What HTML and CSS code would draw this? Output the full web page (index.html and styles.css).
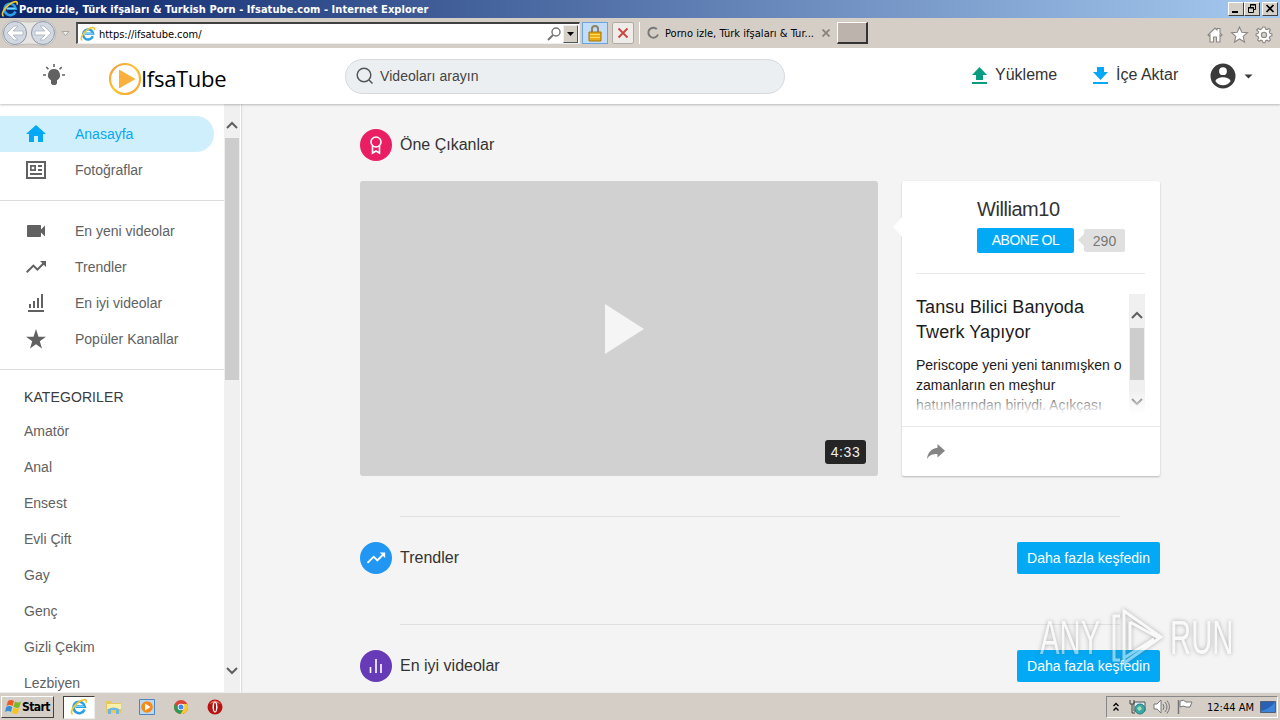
FILE: index.html
```html
<!DOCTYPE html>
<html lang="tr">
<head>
    <meta charset="UTF-8">
    <meta name="viewport" content="width=device-width, initial-scale=1.0">
    <title>Porno izle, Türk ifşaları &amp; Turkish Porn - Ifsatube.com</title>
    <link rel="stylesheet" href="styles.css">
</head>
<body>
    <svg class="defs" width="0" height="0">
        <symbol id="ie" viewBox="0 0 18 18">
            <path d="M14.5 11.5A5.700 5.700 0 1 1 14.800 8.600H5.500" fill="none" stroke="#2b9fe6" stroke-width="2.600"/>
            <path d="M14.300 8.400H5.600" stroke="#8bdcff" stroke-width="1"/>
            <path d="M2.600 16.200C-.5 15 3 8 8.500 4.200C13 1 17.500.5 16 4.800" fill="none" stroke="#f3c62c" stroke-width="1.700"/>
        </symbol>
        <symbol id="trend" viewBox="0 0 24 24">
            <path d="M16 6l2.290 2.290-4.880 4.880-4-4L2 16.590 3.410 18l6-6 4 4 6.300-6.290L22 12V6z"/>
        </symbol>
    </svg>

    <!-- Window title -->
    <div class="titlebar">
        <svg class="title-icon" width="18" height="18"><use href="#ie"/></svg>
        <span class="window-title">Porno izle, Türk ifşaları &amp; Turkish Porn - Ifsatube.com - Internet Explorer</span>
        <div class="window-buttons">
            <span><svg width="14" height="11"><path d="M3 8h6v2H3z"/></svg></span>
            <span><svg width="14" height="11" fill="none" stroke="#000"><path d="M5.500 4V1.500h5v5H9M5 2h6M3.500 4.500h5v5h-5zM3 5h6"/></svg></span>
            <span class="close"><svg width="14" height="11" fill="none" stroke="#000" stroke-width="1.700"><path d="M3.500 2l7 7M10.500 2l-7 7"/></svg></span>
        </div>
    </div>

    <!-- Browser toolbar -->
    <div class="toolbar">
        <svg class="nav-arrows" width="74" height="30" viewBox="0 0 74 30">
            <path d="M15 2Q29 6 43 2A13 13 0 0 1 43 28Q29 24 15 28A13 13 0 0 1 15 2Z" fill="#e7e5e3" stroke="#c0bcb8"/>
            <g fill="#d3d9e2" stroke="#8d97a5">
                <circle cx="15" cy="15" r="11.500"/>
                <circle cx="43" cy="15" r="11.500"/>
            </g>
            <g fill="#fff" stroke="#a9b2bf" stroke-width=".8">
                <path d="M7 15l7-7h4l-5 5h10v4H13l5 5h-4z"/>
                <path d="M51 15l-7-7h-4l5 5H35v4h10l-5 5h4z"/>
            </g>
            <path d="M62 13.500h7l-3.500 4z" fill="#eee" stroke="#aaa5a0"/>
        </svg>
        <div class="address">
            <svg width="16" height="16"><use href="#ie"/></svg>
            <span>https://ifsatube.com/</span>
            <svg class="address-search" width="14" height="14" fill="none" stroke="#747474"><circle cx="9" cy="5" r="4" stroke-width="1.400"/><path d="M6 8l-5 5" stroke-width="2"/></svg>
            <i class="dropdown"><svg width="7" height="4"><path d="M0 0h7L3.500 4z"/></svg></i>
        </div>
        <div class="tool lock">
            <svg width="14" height="17" viewBox="0 0 14 17"><path d="M4 8V4a3 3 0 0 1 6 0v4" fill="none" stroke="#8f8361" stroke-width="2"/><path d="M1 7h12v9H1z" fill="#e9ad16" stroke="#a47508"/><path d="M2 9.500h10M2 12.500h10" stroke="#ffda61"/></svg>
        </div>
        <div class="tool stop">
            <svg width="12" height="12" fill="none" stroke="#c8463d" stroke-width="1.800"><path d="M1.500 1.500l9 9M10.500 1.500l-9 9"/></svg>
        </div>
        <div class="tab">
            <svg width="14" height="14" fill="none" stroke="#777" stroke-width="2"><path d="M10.800 3A5 5 0 1 0 12 8.500"/></svg>
            <span>Porno izle, Türk ifşaları &amp; Tur...</span>
            <svg width="8" height="8" fill="none" stroke="#85817c" stroke-width="1.700"><path d="M.5.5l7 7M7.500.5l-7 7"/></svg>
        </div>
        <div class="new-tab"></div>
        <svg class="browser-icons" width="66" height="18" fill="#fff" stroke="#8b8782" stroke-width="1.100">
            <path d="M1 9l7-7 2 2V2.500h3V7l2 2-1 1-1-1v7H9.500v-5h-3v5H3V9l-1 1z"/>
            <path d="M32.500 1l2.300 5.200 5.700.5-4.300 3.700 1.300 5.600-5-3-5 3 1.300-5.600-4.300-3.700 5.700-.5z"/>
            <path d="M56 1h2l.5 2 1.500.6 1.900-1.100 1.500 1.500-1.100 1.900.6 1.500 2 .5v2l-2 .5-.6 1.500 1.100 1.900-1.500 1.500-1.900-1.100-1.500.6-.5 2h-2l-.5-2-1.500-.6-1.900 1.100-1.500-1.500 1.100-1.900-.6-1.500-2-.5v-2l2-.5.6-1.500L49.600 4l1.500-1.500L53 3.600l1.500-.6z"/>
            <circle cx="57" cy="8.900" r="2.600" fill="#d6cfc8"/>
        </svg>
    </div>

    <div class="page">
        <header>
            <svg class="bulb" width="24" height="24" viewBox="0 0 24 24" fill="#616161">
                <path d="M12 6a6 6 0 0 0-3 11.200V18h6v-.8A6 6 0 0 0 12 6zM9 18h6v2.500l-1.500 1.500h-3L9 20.500zM11.200 1h1.600v3h-1.600zM1 11.200h3v1.600H1zM20 11.200h3v1.600h-3zM3.800 4.700l1.100-1.100L7 5.700 5.900 6.800zM17 5.700l2.100-2.100 1.100 1.100-2.100 2.100z"/>
            </svg>
            <div class="logo">
                <svg width="34" height="34" viewBox="0 0 34 34">
                    <defs>
                        <linearGradient id="ring" x2="1" y2="1"><stop stop-color="#f79a3c"/><stop offset=".5" stop-color="#fbc42e"/><stop offset="1" stop-color="#f9a03a"/></linearGradient>
                    </defs>
                    <circle cx="17" cy="17" r="15" fill="#fff" stroke="url(#ring)" stroke-width="2.200"/>
                    <path d="M11 7.500v19L27.500 17z" fill="#fbb03b"/>
                </svg>
                <span>IfsaTube</span>
            </div>
            <div class="search">
                <svg width="18" height="18" fill="none" stroke="#555" stroke-width="1.500"><circle cx="8" cy="8" r="6.800"/><path d="M13 13l3.500 3.500"/></svg>
                <span>Videoları arayın</span>
            </div>
            <a class="action">
                <svg width="15" height="17" fill="#0a9b81"><path d="M7.500 0L15 8h-4v5H4V8H0zM0 15h15v2H0z"/></svg>
                <span>Yükleme</span>
            </a>
            <a class="action import">
                <svg width="15" height="17" fill="#03a9f4"><path d="M4 0h7v5h4l-7.500 8L0 5h4zM0 15h15v2H0z"/></svg>
                <span>İçe Aktar</span>
            </a>
            <svg class="user" width="44" height="26" viewBox="0 0 44 26" fill="#3a3a3a">
                <path fill-rule="evenodd" d="M13 .5a12.500 12.500 0 1 0 0 25 12.500 12.500 0 0 0 0-25zm0 3.800a3.900 3.900 0 1 1 0 7.800 3.900 3.900 0 0 1 0-7.800zm0 17.900a9 9 0 0 1-7.500-4c0-2.500 5-3.900 7.500-3.900s7.500 1.400 7.500 3.900a9 9 0 0 1-7.500 4z"/>
                <path d="M34.500 11.500h8l-4 4z"/>
            </svg>
        </header>

        <div class="content">
            <aside>
                <nav>
                    <a class="item active"><svg viewBox="0 0 24 24"><path d="M10 20v-6h4v6h5v-8h3L12 3 2 12h3v8z"/></svg>Anasayfa</a>
                    <a class="item"><svg viewBox="0 0 24 24"><path fill-rule="evenodd" d="M2 3h20v18H2zM4 5v14h16V5zM6 7h6v6H6zM7.700 8.700v2.600h2.600V8.700zM14 7h4v2h-4zM14 11h4v2h-4zM6 15h12v2H6z"/></svg>Fotoğraflar</a>
                    <hr>
                    <a class="item"><svg viewBox="0 0 24 24"><path d="M17 10.500V7c0-.6-.4-1-1-1H4c-.6 0-1 .4-1 1v10c0 .6.4 1 1 1h12c.6 0 1-.4 1-1v-3.500l4 4v-11z"/></svg>En yeni videolar</a>
                    <a class="item"><svg><use href="#trend"/></svg>Trendler</a>
                    <a class="item"><svg viewBox="0 0 24 24"><path d="M4 19h16v2H4zM5 13h2v4H5zM9 10h2v7H9zM13 7h2v10h-2zM17 3h2v14h-2z"/></svg>En iyi videolar</a>
                    <a class="item"><svg viewBox="0 0 24 24"><path d="M12 17.300l6 4.200-2.200-7.200L22 9.700h-7.500L12 2l-2.500 7.700H2l6.200 4.600L6 21.500z"/></svg>Popüler Kanallar</a>
                    <hr>
                    <h4>KATEGORILER</h4>
                    <a class="category">Amatör</a>
                    <a class="category">Anal</a>
                    <a class="category">Ensest</a>
                    <a class="category">Evli Çift</a>
                    <a class="category">Gay</a>
                    <a class="category">Genç</a>
                    <a class="category">Gizli Çekim</a>
                    <a class="category">Lezbiyen</a>
                </nav>
                <div class="scrollbar">
                    <svg width="12" height="8"><path d="M1 7l5-5 5 5"/></svg>
                    <i></i>
                    <svg class="down" width="12" height="8"><path d="M1 1l5 5 5-5"/></svg>
                </div>
            </aside>

            <main>
                <div class="section-title">
                    <span class="badge pink"><svg width="24" height="24" viewBox="0 0 24 24"><circle cx="12" cy="9" r="5"/><path d="M8.500 13v7l3.500-2 3.500 2v-7"/></svg></span>
                    <h2>Öne Çıkanlar</h2>
                </div>

                <div class="featured">
                    <div class="video">
                        <svg width="40" height="50"><path d="M0 0v50l39-25z" fill="#f5f5f5"/></svg>
                        <span class="duration">4:33</span>
                    </div>
                    <div class="card">
                        <div class="channel">
                            <h3>William10</h3>
                            <div class="subscribe">
                                <button>ABONE OL</button>
                                <span class="count">290</span>
                            </div>
                        </div>
                        <div class="info">
                            <div class="description">
                                <h3>Tansu Bilici Banyoda Twerk Yapıyor</h3>
                                <p>Periscope yeni yeni tanımışken o zamanların en meşhur hatunlarından biriydi. Açıkçası</p>
                            </div>
                            <div class="scrollbar small">
                                <svg width="12" height="8"><path d="M1 7l5-5 5 5"/></svg>
                                <i></i>
                                <svg class="down" width="12" height="8"><path d="M1 1l5 5 5-5"/></svg>
                            </div>
                        </div>
                        <div class="share">
                            <svg width="18" height="15"><path d="M10.500 0L18 6.800l-7.500 6.700V10C5.500 10 2.200 11 0 15c.7-6 4-10.300 10.500-11.200z" fill="#858585"/></svg>
                        </div>
                    </div>
                </div>

                <section>
                    <div class="section-title">
                        <span class="badge blue"><svg class="solid" width="22" height="22"><use href="#trend"/></svg></span>
                        <h2>Trendler</h2>
                        <button>Daha fazla keşfedin</button>
                    </div>
                </section>
                <section>
                    <div class="section-title">
                        <span class="badge purple"><svg width="24" height="24" viewBox="0 0 24 24"><path d="M6.500 19v-6M12 19V5M17 19v-9"/></svg></span>
                        <h2>En iyi videolar</h2>
                        <button>Daha fazla keşfedin</button>
                    </div>
                </section>
            </main>
        </div>

        <div class="watermark">
            <span>ANY</span>
            <svg width="56" height="60" viewBox="0 0 56 60" fill="none" stroke="#fff" stroke-width="3">
                <path d="M11 8H5v44h6"/>
                <path d="M15 3v52l37-26zM21 14v28M21 14l29 16M15 50l30-19"/>
            </svg>
            <span>RUN</span>
        </div>
    </div>

    <div class="taskbar">
        <div class="start">
            <svg width="17" height="16" viewBox="0 0 17 16">
                <path d="M3 2q3-2 6 0L7.500 7q-3-2-6 0z" fill="#ec5b24"/>
                <path d="M10 2.500q3 2 6 0L14.500 8q-3 2-6-.5z" fill="#7bb928"/>
                <path d="M1.200 8q3-2 6 0L6 13q-3-2-6 0z" fill="#348fd8"/>
                <path d="M8.200 8.500q3 2 6 .5L13 14q-3 2-6-.5z" fill="#f6c51d"/>
            </svg>
            <span>Start</span>
        </div>
        <div class="task open"><svg width="18" height="18"><use href="#ie"/></svg></div>
        <div class="task">
            <svg width="17" height="16"><path d="M1 2h5l1 2h9v10H1z" fill="#e8c85d"/><path d="M2 5h14v5H2z" fill="#fbefaa"/><path d="M3 15v-5q6-3 11 0v5h-3v-4H6v4z" fill="#6cb6df"/></svg>
        </div>
        <div class="task">
            <svg width="16" height="16"><path d="M.5.5h15v15H.5z" fill="#b9d9f5" stroke="#4c86bb"/><circle cx="8" cy="8" r="5.800" fill="#f58a16"/><path d="M6 4.500v7L11.500 8z" fill="#fff"/></svg>
        </div>
        <div class="task">
            <svg width="14" height="14" viewBox="0 0 14 14"><circle cx="7" cy="7" r="7" fill="#db4437"/><path d="M1 3.500A7 7 0 0 0 6.500 14L10 8.500 4 8.500z" fill="#2c9b50"/><path d="M7 4h6.300A7 7 0 0 1 6.500 14L10 8.500z" fill="#f8cb2e"/><circle cx="7" cy="7" r="3.300" fill="#fff"/><circle cx="7" cy="7" r="2.500" fill="#4285f4"/></svg>
        </div>
        <div class="task">
            <svg width="16" height="16"><circle cx="8" cy="8" r="7.500" fill="#b91212"/><path d="M2 5q6-7 12 0-6-2-12 0" fill="#e06a60"/><ellipse cx="8" cy="8" rx="2.500" ry="5.500" fill="#fff"/><ellipse cx="8" cy="8" rx="1" ry="4.500" fill="#a51010"/></svg>
        </div>
        <div class="tray">
            <svg width="6" height="10" fill="none" stroke="#000" stroke-width="1.300"><path d="M.5 4L3 1.500 5.500 4M.5 8.500L3 6l2.500 2.500"/></svg>
            <svg class="network" width="17" height="16"><path d="M5 3h11v9H5z" fill="#d7edf2" stroke="#555"/><path d="M1 1v4h4V1M3 5v9h3" fill="none" stroke="#444"/><circle cx="11" cy="10" r="5" fill="#3aa7a1" stroke="#2a8183"/><path d="M8 9l3-2 2 3-3 2z" fill="#a4dfc0"/></svg>
            <svg class="sound" width="17" height="16" fill="none" stroke="#777"><path d="M1 5h3l4-4v13l-4-4H1z" fill="#fff"/><path d="M10 5q2 3 0 6M12 3q4 5 0 10M14 1.500q5 6 0 13"/></svg>
            <svg class="flag" width="17" height="16"><path d="M1.500 1v14" stroke="#777" stroke-width="1.500"/><path d="M3 2q4-2 6 1h6l-2 5H9Q6 6 3 8z" fill="#fff" stroke="#777"/></svg>
            <span>12:44 AM</span>
            <svg class="desktop" width="16" height="13"><path d="M.5.5h15v11H.5z" fill="#2860b5" stroke="#516078"/><path d="M1 10Q10 8 15 1v10H1z" fill="#3d83d7"/></svg>
        </div>
    </div>
</body>
</html>
```
FILE: styles.css
```css
* {
    box-sizing: border-box;
}

body {
    margin: 0;
    width: 1280px;
    height: 720px;
    overflow: hidden;
    display: flex;
    flex-direction: column;
    font-family: "Liberation Sans", Arial, sans-serif;
    color: #333;
    background-color: #f4f4f4;
}

svg {
    flex-shrink: 0;
}

.defs {
    position: absolute;
}

h2, h3, h4, p {
    margin: 0;
    font-weight: normal;
}

.titlebar, .toolbar, .taskbar {
    display: flex;
    align-items: center;
    flex-shrink: 0;
    font-family: "DejaVu Sans Condensed", "DejaVu Sans", sans-serif;
    font-size: 11px;
    color: #000;
    white-space: nowrap;
}

.titlebar {
    height: 18px;
    padding: 0 2px 0 1px;
    background: linear-gradient(to right, #0a246a, #a6caf0);
}

.window-title {
    color: white;
    font-weight: bold;
    letter-spacing: 0.06px;
}

.window-buttons {
    display: flex;
    margin-left: auto;
}

.window-buttons span {
    display: flex;
    width: 16px;
    height: 14px;
    background-color: #d4d0c8;
    border: 1px solid;
    border-color: #fff #404040 #404040 #fff;
}

.window-buttons .close {
    margin-left: 2px;
}

.toolbar {
    height: 30px;
    background-color: #d5cec7;
}

.address {
    display: flex;
    align-items: center;
    width: 504px;
    height: 22px;
    margin-left: 2px;
    padding: 1px 1px 1px 2px;
    background-color: white;
    border: 1px solid #eee;
    border-top: 2px solid #404040;
    border-left: 2px solid #555;
}

.address span {
    margin: 1px 0 0 3px;
    letter-spacing: -0.03px;
}

.address-search {
    margin-left: auto;
}

.dropdown {
    display: flex;
    align-items: center;
    justify-content: center;
    width: 15px;
    height: 18px;
    margin-left: 2px;
    background-color: #d4d0c8;
    border: 1px solid;
    border-color: #eee #555 #555 #eee;
}

.tool {
    display: flex;
    align-items: center;
    justify-content: center;
    height: 22px;
}

.lock {
    width: 26px;
    margin-left: 2px;
    background-color: #c3dcf8;
    border: 1px solid #6da4df;
}

.stop {
    width: 22px;
    margin-left: 4px;
    background-color: #eeebe9;
    border: 1px solid #b2aca7;
    border-radius: 2px;
}

.tab {
    display: flex;
    align-items: center;
    width: 198px;
    height: 22px;
    margin-left: 5px;
    padding-left: 6px;
    border-left: 1px solid #fff;
}

.tab span {
    width: 151px;
    margin: 1px 6px 0 5px;
    letter-spacing: 0.03px;
}

.new-tab {
    width: 31px;
    height: 22px;
    background-color: #bbb3ac;
    border: 1px solid;
    border-width: 1px 2px 2px 1px;
    border-color: #fff #333 #333 #fff;
}

.browser-icons {
    margin: 3px 7px 0 auto;
}

.page {
    position: relative;
    display: flex;
    flex-direction: column;
    height: 644px;
    overflow: hidden;
}

header {
    position: relative;
    z-index: 1;
    display: flex;
    align-items: center;
    flex-shrink: 0;
    height: 56px;
    padding-left: 42px;
    background-color: white;
    box-shadow: 0 1px 2px rgba(0, 0, 0, 0.25);
}

.bulb {
    margin-bottom: 2px;
}

.logo {
    display: flex;
    align-items: center;
    width: 237px;
    margin: 6px 0 0 42px;
    color: #000;
    font-family: "Open Sans", sans-serif;
    font-size: 22px;
    letter-spacing: -0.3px;
}

.logo span {
    margin: -2px 0 0 -1px;
}

.search {
    display: flex;
    align-items: center;
    width: 440px;
    height: 35px;
    padding-left: 10px;
    font-size: 14px;
    color: #444;
    background-color: #eceff1;
    border: 1px solid #d6dadd;
    border-radius: 18px;
}

.search span {
    margin-left: 6px;
    letter-spacing: 0.05px;
}

.action {
    display: flex;
    align-items: center;
    width: 121px;
    margin-left: 187px;
    font-size: 16px;
    margin-bottom: 2px;
}

.action span {
    margin-left: 8px;
}

.import {
    width: 117px;
    margin-left: 0;
}

.content {
    display: flex;
    height: 588px;
}

aside {
    display: flex;
    width: 241px;
    background-color: white;
    box-shadow: 0 0 2px rgba(0, 0, 0, 0.3);
}

nav {
    width: 224px;
    padding-top: 12px;
}

.item, .category {
    display: flex;
    align-items: center;
    height: 36px;
    font-size: 14px;
    color: #616161;
}

.item {
    padding-left: 24px;
}

.item svg {
    width: 24px;
    height: 24px;
    margin-right: 27px;
    fill: #616161;
}

.item.active {
    width: 214px;
    color: #03a9f4;
    background-color: #d0effd;
    border-radius: 0 18px 18px 0;
}

.item.active svg {
    fill: #03a9f4;
}

.category {
    padding-left: 24px;
}

hr {
    height: 1px;
    margin: 12px 0;
    background-color: #dcdcdc;
    border: none;
}

h4 {
    height: 31px;
    padding: 7px 0 0 24px;
    font-size: 14px;
    line-height: 16px;
    color: #3b3b3b;
    letter-spacing: 0.1px;
}

.scrollbar {
    display: flex;
    flex-direction: column;
    align-items: center;
    width: 16px;
    padding: 17px 0;
    background-color: #f0f0f0;
}

.scrollbar svg {
    fill: none;
    stroke: #606060;
    stroke-width: 2;
}

.scrollbar i {
    width: 14px;
    height: 242px;
    margin-top: 9px;
    background-color: #cdcdcd;
}

.scrollbar .down {
    margin-top: auto;
}

main {
    width: 800px;
    margin-left: 119px;
    padding-top: 25px;
}

.section-title {
    display: flex;
    align-items: center;
    height: 32px;
}

.badge {
    display: flex;
    align-items: center;
    justify-content: center;
    width: 32px;
    height: 32px;
    margin-right: 8px;
    border-radius: 50%;
}

.badge svg {
    fill: none;
    stroke: white;
    stroke-width: 1.6;
}

.badge .solid {
    fill: white;
    stroke: none;
}

.pink {
    background-color: #e91e63;
}

.blue {
    background-color: #2196f3;
}

.purple {
    background-color: #673ab7;
}

h2 {
    font-size: 16px;
    line-height: 20px;
}

button {
    padding: 0;
    color: white;
    font-family: inherit;
    font-size: 14px;
    background-color: #03a9f4;
    border: none;
    border-radius: 2px;
}

.section-title button {
    width: 143px;
    height: 32px;
    margin-left: auto;
}

.featured {
    display: flex;
    justify-content: space-between;
    height: 295px;
    margin: 20px 0 40px;
}

.video {
    position: relative;
    display: flex;
    align-items: center;
    justify-content: center;
    width: 518px;
    padding-left: 11px;
    background-color: #d1d1d1;
    border-radius: 3px;
}

.duration {
    position: absolute;
    right: 12px;
    bottom: 12px;
    width: 41px;
    height: 24px;
    line-height: 25px;
    font-size: 14px;
    text-align: center;
    letter-spacing: 0.6px;
    color: #eee;
    background-color: #252525;
    border-radius: 3px;
}

.card {
    position: relative;
    width: 258px;
    background-color: white;
    border-radius: 2px;
    box-shadow: 0 1px 2px rgba(0, 0, 0, 0.25);
}

.card::before {
    content: "";
    position: absolute;
    left: -9px;
    top: 36px;
    border: 10px solid transparent;
    border-left: none;
    border-right: 9px solid white;
}

.channel {
    height: 93px;
    margin: 0 15px 0 14px;
    padding: 17px 0 0 61px;
    border-bottom: 1px solid #e8e8e8;
}

.channel h3 {
    font-size: 20px;
    line-height: 23px;
    letter-spacing: -0.45px;
}

.subscribe {
    display: flex;
    align-items: center;
    margin-top: 7px;
}

.subscribe button {
    width: 97px;
    height: 25px;
    padding-bottom: 1px;
    letter-spacing: -0.5px;
}

.count {
    position: relative;
    width: 41px;
    height: 23px;
    margin-left: 10px;
    line-height: 24px;
    font-size: 14px;
    text-align: center;
    color: #777;
    background-color: #e0e0e0;
    border-radius: 2px;
}

.count::before {
    content: "";
    position: absolute;
    left: -6px;
    top: 5px;
    border: 6px solid transparent;
    border-left: none;
    border-right-color: #dde1d9;
}

.info {
    position: relative;
    display: flex;
    height: 120px;
    margin: 20px 15px 12px 14px;
}

/* Fade out the end of the description */
.info::after {
    content: "";
    position: absolute;
    inset: auto 0 0;
    height: 24px;
    background: linear-gradient(rgba(255, 255, 255, 0), white);
}

.description {
    width: 213px;
    padding-top: 1px;
    overflow: hidden;
    color: #1b1b1b;
}

.description h3 {
    width: 190px;
    font-size: 18px;
    line-height: 25px;
    letter-spacing: 0.1px;
}

.description p {
    margin-top: 10px;
    font-size: 14px;
    line-height: 20px;
}

.scrollbar.small {
    padding: 17px 0 8px;
}

.small i {
    height: 52px;
}

.share {
    display: flex;
    align-items: center;
    height: 50px;
    padding-left: 25px;
    border-top: 1px solid #e8e8e8;
}

section {
    height: 108px;
    position: relative;
    padding-top: 26px;
}

section::before {
    content: "";
    position: absolute;
    top: 0;
    left: 40px;
    right: 40px;
    border-top: 1px solid #e0e0e0;
}

.watermark {
    position: absolute;
    left: 1040px;
    top: 560px;
    display: flex;
    align-items: center;
    gap: 5px;
    width: 194px;
    height: 60px;
    font-size: 48px;
    line-height: 60px;
    color: white;
    opacity: 0.5;
    filter: drop-shadow(0 0 2px #666);
}

.watermark span {
    width: 64px;
    transform: scaleX(0.61);
    transform-origin: left;
}

.taskbar {
    height: 28px;
    padding-top: 1px;
    background-color: #d5cec7;
    border-top: 1px solid #eee;
}

.start {
    display: flex;
    align-items: center;
    width: 53px;
    height: 22px;
    margin: 0 9px 0 1px;
    padding-left: 3px;
    font-size: 12px;
    font-weight: bold;
    border: 1px solid;
    border-color: #fff #404040 #404040 #fff;
    letter-spacing: -0.6px;
}

.task {
    display: flex;
    align-items: center;
    justify-content: center;
    width: 32px;
    height: 23px;
    margin-right: 2px;
}

.task.open {
    background-color: #fff;
    border: 1px solid;
    border-color: #404040 #eee #eee #404040;
}

.tray {
    display: flex;
    align-items: center;
    width: 172px;
    height: 22px;
    margin-left: auto;
    margin-right: 2px;
    padding-left: 6px;
    border: 1px solid;
    border-color: #888 #fff #fff #888;
}

.network {
    margin-left: 10px;
}

.sound {
    margin-left: 7px;
}

.flag {
    margin-left: 7px;
}

.tray span {
    margin-left: 13px;
    width: 53px;
}
```
